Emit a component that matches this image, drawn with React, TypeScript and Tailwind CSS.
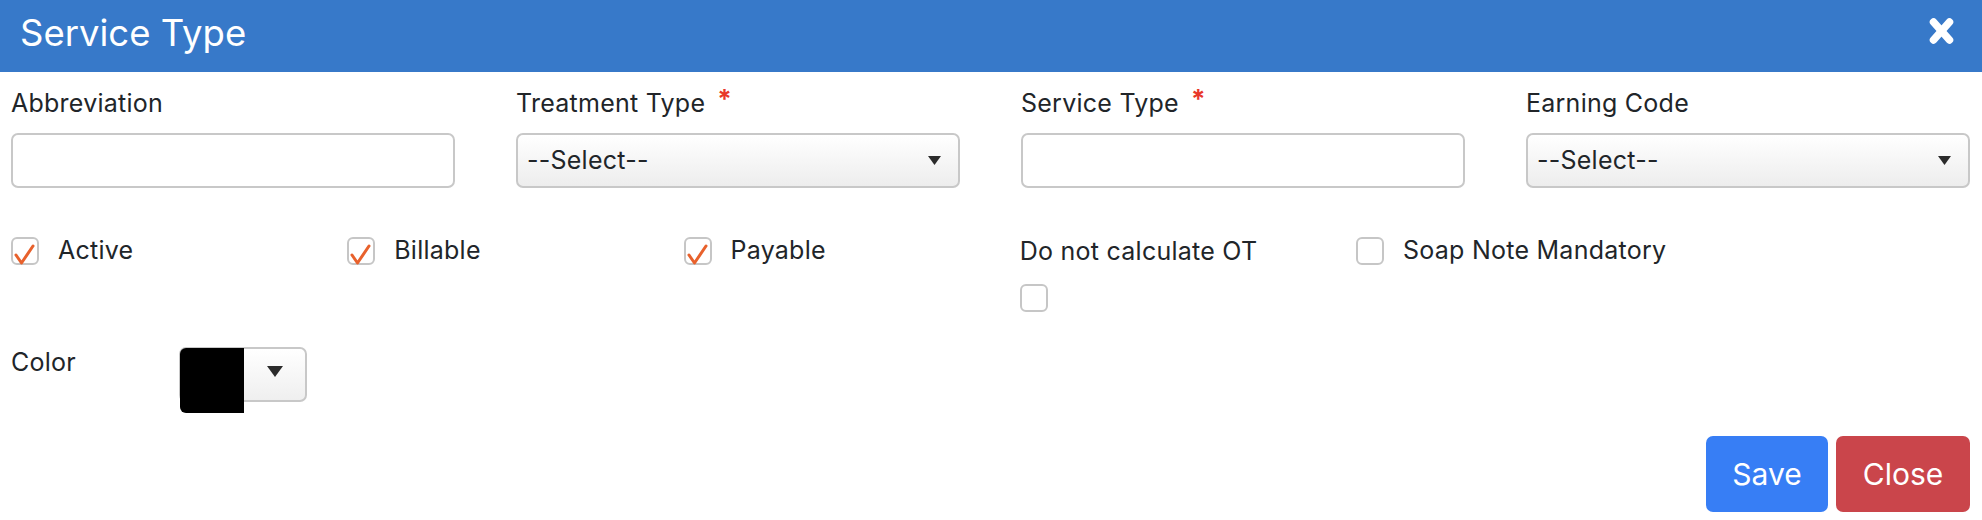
import React from "react";

function Caret() {
  return (
    <svg width="13" height="9" viewBox="0 0 13 9">
      <polygon points="0,0 13,0 6.5,9" fill="#2b2b2b" />
    </svg>
  );
}

function Check({ checked }: { checked: boolean }) {
  return (
    <div className="relative w-[28px] h-[28px] shrink-0 rounded-[6px] border-2 border-[#c6c6c6] bg-white">
      {checked && (
        <svg className="absolute left-0 top-0" width="28" height="28" viewBox="0 0 28 28">
          <polyline
            points="5,17 10.5,25 22,8"
            fill="none"
            stroke="#e8612c"
            strokeWidth="3"
            strokeLinecap="round"
            strokeLinejoin="round"
            transform="translate(-2,-1)"
          />
        </svg>
      )}
    </div>
  );
}

function Label({ text, req }: { text: string; req?: boolean }) {
  return (
    <div className="h-[30px] leading-[30px] text-[25px] tracking-[0.25px] text-[#212529] flex items-start">
      <span>{text}</span>
      {req && <span className="ml-[12px] text-[#e8372a] text-[26px] leading-[22px] font-bold">*</span>}
    </div>
  );
}

function TextInput() {
  return <div className="mt-[15px] h-[55px] rounded-[7px] border-2 border-[#c8c8c8] bg-white" />;
}

function Select() {
  return (
    <div className="mt-[15px] h-[55px] rounded-[7px] border-2 border-[#c8c8c8] bg-linear-to-b from-white to-[#ededed] flex items-center justify-between pl-[9px] pr-[17px]">
      <span className="text-[25px] tracking-[0.25px] text-[#212529]">--Select--</span>
      <Caret />
    </div>
  );
}

export default function App() {
  return (
    <div className="w-[1982px] h-[520px] bg-white font-['Inter',sans-serif] text-[#212529] overflow-hidden">
      <div className="h-[72px] bg-[#3779c9] flex items-center justify-between pl-[20px] pr-[28px]">
        <span className="text-white text-[36.5px] leading-none -mt-[6px]">Service Type</span>
        <svg width="25" height="28" viewBox="0 0 25 28" className="-mt-[10px]">
          <g stroke="white" strokeWidth="7.5" strokeLinecap="round">
            <line x1="4.5" y1="5" x2="20.5" y2="23" />
            <line x1="20.5" y1="5" x2="4.5" y2="23" />
          </g>
        </svg>
      </div>

      <div className="pl-[11px]">
        <div className="grid grid-cols-[repeat(4,444px)] gap-x-[61px] pt-[16px]">
          <div>
            <Label text="Abbreviation" />
            <TextInput />
          </div>
          <div>
            <Label text="Treatment Type" req />
            <Select />
          </div>
          <div>
            <Label text="Service Type" req />
            <TextInput />
          </div>
          <div>
            <Label text="Earning Code" />
            <Select />
          </div>
        </div>

        <div className="grid grid-cols-[repeat(5,336.25px)] mt-[49px] text-[25px] tracking-[0.25px]">
          <div className="flex items-center h-[28px] gap-[19px]">
            <Check checked />
            <span>Active</span>
          </div>
          <div className="flex items-center h-[28px] gap-[19px]">
            <Check checked />
            <span>Billable</span>
          </div>
          <div className="flex items-center h-[28px] gap-[19px]">
            <Check checked />
            <span>Payable</span>
          </div>
          <div className="flex flex-col items-start">
            <div className="h-[28px] leading-[28px]">Do not calculate OT</div>
            <div className="mt-[19px]">
              <Check checked={false} />
            </div>
          </div>
          <div className="flex items-center h-[28px] gap-[19px]">
            <Check checked={false} />
            <span>Soap Note Mandatory</span>
          </div>
        </div>

        <div className="flex items-start mt-[35px]">
          <div className="w-[168px] h-[30px] leading-[30px] text-[25px] tracking-[0.25px] mt-[0px]">Color</div>
          <div className="relative w-[128px] h-[55px] rounded-[7px] border-2 border-[#c8c8c8] bg-linear-to-b from-white to-[#efefef] flex">
            <div className="w-[64px] h-[65px] -mt-[1px] -ml-[1px] bg-black rounded-bl-[6px] rounded-tl-[6px] shrink-0" />
            <div className="flex-1 flex items-center justify-center -mt-[6px]">
              <svg width="16" height="11" viewBox="0 0 16 11">
                <polygon points="0,0 16,0 8,11" fill="#2b2b2b" />
              </svg>
            </div>
          </div>
        </div>

        <div className="flex justify-end gap-[8px] pr-[12px] mt-[34px]">
          <button className="h-[76px] w-[122px] rounded-[7px] bg-[#377ef5] text-white text-[30px]">Save</button>
          <button className="h-[76px] w-[134px] rounded-[7px] bg-[#ca454b] text-white text-[30px]">Close</button>
        </div>
      </div>
    </div>
  );
}
